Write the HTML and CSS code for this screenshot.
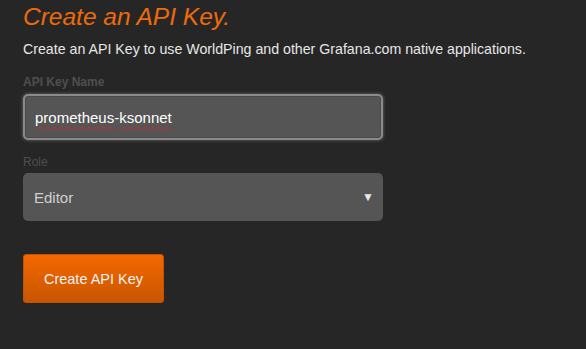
FILE: index.html
```html
<!DOCTYPE html>
<html>
<head>
<meta charset="utf-8">
<link rel="stylesheet" href="styles.css">
</head>
<body>
<div class="page">
  <h1 class="title">Create an API Key.</h1>
  <p class="intro">Create an API Key to use WorldPing and other Grafana.com native applications.</p>
  <div class="field">
    <label class="label label-bold">API Key Name</label>
    <div class="input"><span class="spell">prometheus</span>-<span class="spell">ksonnet</span></div>
  </div>
  <div class="field">
    <label class="label">Role</label>
    <div class="select"><span>Editor</span><span class="arrow">&#9660;</span></div>
  </div>
  <button class="btn">Create API Key</button>
</div>
</body>
</html>
```
FILE: styles.css
```css
html, body {
  margin: 0;
  padding: 0;
  background: #262626;
  height: 100%;
  overflow: hidden;
}
.page {
  padding: 0 23px;
  font-family: "Liberation Sans", Arial, sans-serif;
  display: flex;
  flex-direction: column;
  align-items: flex-start;
}
.title {
  margin: 2px 0 0;
  font-size: 24.5px;
  font-style: italic;
  font-weight: normal;
  color: #ee6b0b;
  line-height: 30px;
}
.intro {
  margin: 8px 0 0;
  font-size: 14.2px;
  color: #e6e6e6;
  line-height: 18px;
}
.field {
  width: 360px;
  display: flex;
  flex-direction: column;
}
.label {
  font-size: 12px;
  color: #4f4f4f;
  line-height: 14px;
  margin-top: 15px;
  margin-bottom: 4px;
}
.label-bold { font-weight: bold; margin-top: 17px; margin-bottom: 5px; }
.input {
  box-sizing: border-box;
  height: 46px;
  background: #555;
  border: 2px solid #8a8a8a;
  border-radius: 5px;
  box-shadow: 0 0 3px 1px rgba(160,160,160,0.35), inset 0 0 0 1px #4a4a4a;
  padding: 0 10px;
  display: flex;
  align-items: center;
  font-size: 15px;
  color: #fff;
}
.spell {
  text-decoration: underline wavy #d22;
  text-decoration-thickness: 1px;
  text-underline-offset: 3px;
}
.select {
  box-sizing: border-box;
  height: 48px;
  background: #555;
  border-radius: 5px;
  padding: 0 9px 0 11px;
  display: flex;
  align-items: center;
  justify-content: space-between;
  font-size: 15px;
  color: #d0d0d0;
}
.arrow { font-size: 12px; color: #e8e8e8; }
.btn {
  margin-top: 33px;
  width: 141px;
  height: 49px;
  border: 1px solid #c25400;
  border-radius: 3px;
  background: linear-gradient(#f46800, #c85600);
  color: #f2f2f2;
  font-family: inherit;
  font-size: 14.5px;
}
```
